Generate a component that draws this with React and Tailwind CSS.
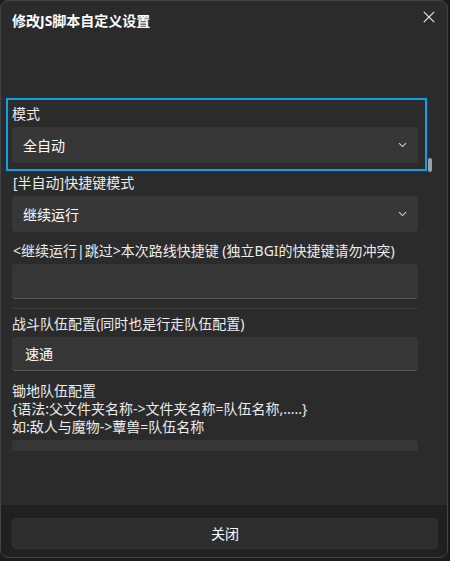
import React from "react";

const font = { fontFamily: '"Noto Sans", "Noto Sans CJK SC", sans-serif' };

function Chevron() {
  return (
    <svg width="9" height="6" viewBox="0 0 9 6" className="shrink-0">
      <path d="M1 1.2 L4.5 4.6 L8 1.2" fill="none" stroke="#cfcfcf" strokeWidth="1.1" />
    </svg>
  );
}

function Select({ value }) {
  return (
    <div className="ml-[11px] flex h-[36px] w-[406px] items-center justify-between rounded-[4px] bg-[#373737] pl-[11px] pr-[11px] text-[14px] text-white">
      <span>{value}</span>
      <Chevron />
    </div>
  );
}

function TextInput({ value, className = "" }) {
  return (
    <div
      className={
        "ml-[11px] flex w-[406px] items-center rounded-[4px] border-b border-[#5a5a5a] bg-[#363636] pl-[13px] text-[14px] text-white " +
        className
      }
    >
      {value}
    </div>
  );
}

export default function App() {
  return (
    <div className="h-[561px] w-[450px] bg-[#1b1b1b]" style={font}>
      <div className="flex h-[558px] w-[448px] flex-col overflow-hidden rounded-[8px] border border-[#454545] bg-[#2b2b2b]">
        {/* header */}
        <div className="flex h-[97px] shrink-0 items-start justify-between pl-[11px] pr-[12px] pt-[11px]">
          <h1 className="text-[14px] font-bold leading-[18px] text-white">修改JS脚本自定义设置</h1>
          <svg width="12" height="12" viewBox="0 0 12 12" className="mt-[-1px]">
            <path d="M0.8 0.8 L11.2 11.2 M11.2 0.8 L0.8 11.2" stroke="#e6e6e6" strokeWidth="1.2" />
          </svg>
        </div>

        {/* scroll area */}
        <div className="relative h-[353px] shrink-0 overflow-hidden">
          <div className="ml-[5px] w-[421px] border-2 border-[#0ea2e4] pb-[6px] pt-[4px]">
            <p className="pl-[4px] text-[14px] leading-[20px] text-[#ececec]">模式</p>
            <div className="ml-[4px] mt-[3px] flex h-[36px] w-[406px] items-center justify-between rounded-[4px] bg-[#373737] px-[11px] text-[14px] text-white">
              <span>全自动</span>
              <Chevron />
            </div>
          </div>

          <p className="ml-[12px] mt-[2px] text-[14px] leading-[20px] text-[#ececec]">[半自动]快捷键模式</p>
          <div className="mt-[3px]">
            <Select value="继续运行" />
          </div>

          <p className="ml-[12px] mt-[9px] text-[14px] leading-[20px] text-[#ececec]">
            &lt;继续运行|跳过&gt;本次路线快捷键 (独立BGI的快捷键请勿冲突)
          </p>
          <TextInput className="mt-[3px] h-[35px]" value="" />

          <div className="ml-[11px] mt-[9px] h-px w-[406px] bg-[#3d3d3d]" />

          <p className="ml-[11px] mt-[5px] text-[14px] leading-[20px] text-[#ececec]">战斗队伍配置(同时也是行走队伍配置)</p>
          <TextInput className="mt-[3px] h-[34px]" value="速通" />

          <div className="ml-[11px] mt-[11px] text-[14px] leading-[18px] text-[#ececec]">
            <p>锄地队伍配置</p>
            <p>{"{语法:父文件夹名称->文件夹名称=队伍名称,.....}"}</p>
            <p>如:敌人与魔物-&gt;蕈兽=队伍名称</p>
          </div>
          <TextInput className="mt-[4px] h-[34px]" value="" />

          <div className="absolute left-[427px] top-[60px] h-[14px] w-[4px] rounded-full bg-[#a0a0a0]" />
        </div>

        <div className="flex-1" />

        {/* footer */}
        <div className="flex h-[52px] shrink-0 items-start bg-[#202020] pt-[13px]">
          <button
            type="button"
            className="ml-[11px] flex h-[31px] w-[426px] items-center justify-center rounded-[4px] border border-[#333333] bg-[#2d2d2d] text-[14px] text-white"
          >
            关闭
          </button>
        </div>
      </div>
    </div>
  );
}
